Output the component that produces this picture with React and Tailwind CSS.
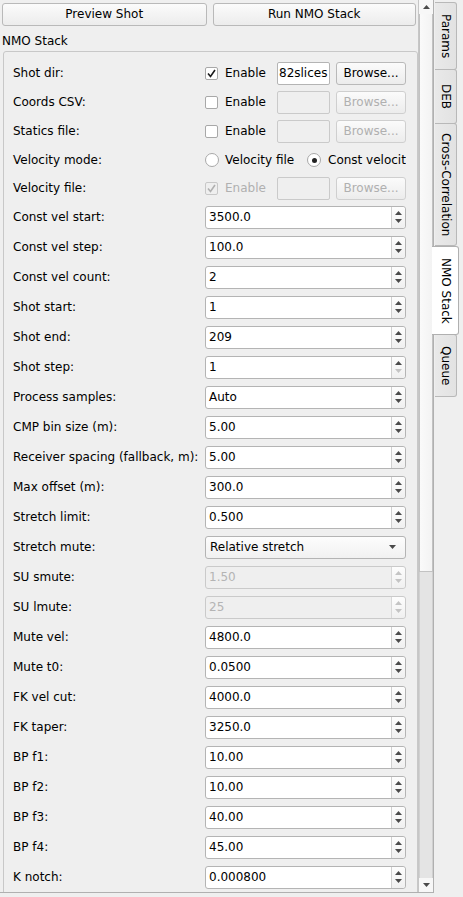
import React from 'react'

const font = { fontFamily: '"DejaVu Sans", "Liberation Sans", sans-serif' }

const Up = ({ dim }) => (
  <svg width="7" height="4" viewBox="0 0 7 4">
    <path d="M0 4 L3.5 0 L7 4 Z" fill={dim ? '#c4c4c4' : '#4a4a4a'} />
  </svg>
)

const Down = ({ dim }) => (
  <svg width="7" height="4" viewBox="0 0 7 4">
    <path d="M0 0 L7 0 L3.5 4 Z" fill={dim ? '#c4c4c4' : '#4a4a4a'} />
  </svg>
)

function PushButton({ children, disabled, className = '' }) {
  return (
    <div
      className={`flex items-center justify-center rounded-[3px] border border-[#b9b9b9] bg-gradient-to-b from-[#fbfbfb] to-[#ececec] ${disabled ? 'text-[#b0b0b0] border-[#cfcfcf]' : 'text-black'} ${className}`}
    >
      {children}
    </div>
  )
}

function CheckBox({ checked, disabled }) {
  return (
    <div
      className={`flex h-[13px] w-[13px] items-center justify-center rounded-[2px] border ${disabled ? 'border-[#c8c8c8] bg-[#efefef]' : 'border-[#a8a8a8] bg-white'}`}
    >
      {checked && (
        <svg width="9" height="9" viewBox="0 0 9 9">
          <path d="M1 4.5 L3.5 7.5 L8 1" fill="none" stroke={disabled ? '#b0b0b0' : '#1a1a1a'} strokeWidth="1.6" />
        </svg>
      )}
    </div>
  )
}

function Radio({ checked }) {
  return (
    <div className="flex h-[14px] w-[14px] shrink-0 items-center justify-center rounded-full border border-[#a8a8a8] bg-white">
      {checked && <div className="h-[5px] w-[5px] rounded-full bg-[#222]" />}
    </div>
  )
}

function FileField({ checked, disabled, enableDisabled, value }) {
  return (
    <div className="flex items-center">
      <CheckBox checked={checked} disabled={enableDisabled} />
      <span className={`ml-[7px] w-[52px] ${enableDisabled ? 'text-[#b0b0b0]' : ''}`}>Enable</span>
      <div
        className={`flex h-[23px] w-[53px] items-center overflow-hidden rounded-[2px] border px-[1px] ${disabled ? 'border-[#cacaca] bg-[#efefef]' : 'border-[#b4b4b4] bg-white'}`}
      >
        {value}
      </div>
      <PushButton disabled={disabled} className="ml-[6px] h-[23px] w-[70px]">
        Browse...
      </PushButton>
    </div>
  )
}

function SpinBox({ value, disabled, downDim }) {
  return (
    <div
      className={`flex h-[23px] w-[201px] items-stretch rounded-[3px] border ${disabled ? 'border-[#cacaca] bg-[#efefef] text-[#b4b4b4]' : 'border-[#b4b4b4] bg-white text-black'}`}
    >
      <div className="flex flex-1 items-center pl-[3px]">{value}</div>
      <div
        className={`flex w-[14px] flex-col items-center justify-center gap-[4px] border-l ${disabled ? 'border-[#d8d8d8]' : 'border-[#d0d0d0]'} bg-gradient-to-b from-[#fdfdfd] to-[#f0f0f0] rounded-r-[3px]`}
      >
        <Up dim={disabled} />
        <Down dim={disabled || downDim} />
      </div>
    </div>
  )
}

function ComboBox({ value }) {
  return (
    <div className="flex h-[23px] w-[201px] items-center justify-between rounded-[3px] border border-[#b4b4b4] bg-gradient-to-b from-[#fdfdfd] to-[#f1f1f1] pl-[4px] pr-[9px]">
      <span>{value}</span>
      <Down />
    </div>
  )
}

function Row({ label, h, children }) {
  return (
    <div className={`flex items-center ${h}`}>
      <div className="w-[192px]">{label}</div>
      <div className="w-[201px] overflow-hidden whitespace-nowrap">{children}</div>
    </div>
  )
}

const spins = [
  ['Const vel start:', '3500.0'],
  ['Const vel step:', '100.0'],
  ['Const vel count:', '2'],
  ['Shot start:', '1'],
  ['Shot end:', '209'],
  ['Shot step:', '1', { downDim: true }],
  ['Process samples:', 'Auto'],
  ['CMP bin size (m):', '5.00'],
  ['Receiver spacing (fallback, m):', '5.00'],
  ['Max offset (m):', '300.0'],
  ['Stretch limit:', '0.500'],
  ['Stretch mute:', 'Relative stretch', { combo: true }],
  ['SU smute:', '1.50', { disabled: true }],
  ['SU lmute:', '25', { disabled: true }],
  ['Mute vel:', '4800.0'],
  ['Mute t0:', '0.0500'],
  ['FK vel cut:', '4000.0'],
  ['FK taper:', '3250.0'],
  ['BP f1:', '10.00'],
  ['BP f2:', '10.00'],
  ['BP f3:', '40.00'],
  ['BP f4:', '45.00'],
  ['K notch:', '0.000800'],
]

const tabs = [
  { name: 'Params', h: 'h-[68px]' },
  { name: 'DEB', h: 'h-[55px]' },
  { name: 'Cross-Correlation', h: 'h-[123px]' },
  { name: 'NMO Stack', h: 'h-[89px]', active: true },
  { name: 'Queue', h: 'h-[63px]' },
]

function TabBar() {
  return (
    <div className="-ml-px flex w-[30px] flex-col pt-[2px]">
      {tabs.map((t) =>
        t.active ? (
          <div
            key={t.name}
            className={`relative z-10 -ml-px flex w-[27px] items-center justify-center rounded-r-[3px] border-y border-r border-[#b0b0b0] bg-white ${t.h}`}
          >
            <span className="[writing-mode:vertical-rl]">{t.name}</span>
          </div>
        ) : (
          <div
            key={t.name}
            className={`ml-[2px] flex w-[22px] items-center justify-center rounded-r-[3px] border border-l-0 border-[#b8b8b8] bg-gradient-to-r from-[#e9e9e9] to-[#e2e2e2] -mt-px first:mt-0 ${t.h}`}
          >
            <span className="[writing-mode:vertical-rl]">{t.name}</span>
          </div>
        )
      )}
    </div>
  )
}

function ScrollBar() {
  return (
    <div className="flex h-full w-[15px] flex-col border-l border-[#c6c6c6] bg-[#efefef]">
      <div className="flex h-[14px] items-center justify-center bg-[#f7f7f7]">
        <Up />
      </div>
      <div className="h-[558px] border-x border-b border-[#c2c2c2] bg-gradient-to-r from-[#fafafa] to-[#f3f3f3]" />
      <div className="flex-1 border-x border-[#d0d0d0] bg-[#e4e4e4]" />
      <div className="flex h-[14px] items-center justify-center bg-[#f7f7f7]">
        <Down />
      </div>
    </div>
  )
}

export default function App() {
  return (
    <div className="flex h-[897px] w-[463px] overflow-hidden bg-[#efefef] text-[12px] leading-[15px] text-black" style={font}>
      <div className="flex h-[893px] w-[434px] border-b border-r border-[#b0b0b0]">
        <div className="h-full w-[418px] overflow-hidden">
          <div className="flex gap-[6px] px-[2px] pt-[3px]">
            <PushButton className="h-[23px] w-[205px]">Preview Shot</PushButton>
            <PushButton className="h-[23px] w-[204px]">Run NMO Stack</PushButton>
          </div>
          <div className="h-[25px] pl-[2px] pt-[8px]">NMO Stack</div>
          <div className="ml-[3px] w-[415px] rounded-[3px] border border-[#c8c8c8] pl-[9px] pt-[10px]">
            <div className="flex flex-col gap-[6px]">
              <Row label="Shot dir:" h="h-[23px]">
                <FileField checked value="82slices" />
              </Row>
              <Row label="Coords CSV:" h="h-[23px]">
                <FileField disabled />
              </Row>
              <Row label="Statics file:" h="h-[23px]">
                <FileField disabled />
              </Row>
              <Row label="Velocity mode:" h="h-[22px]">
                {/* the radio pair is wider than the field column, Qt clips it */}
                <div className="flex w-[201px] items-center overflow-hidden">
                  <Radio />
                  <span className="ml-[6px] w-[82px] shrink-0">Velocity file</span>
                  <Radio checked />
                  <span className="ml-[7px] shrink-0">Const velocity</span>
                </div>
              </Row>
              <Row label="Velocity file:" h="h-[22px]">
                <FileField checked disabled enableDisabled />
              </Row>
              {spins.map(([label, value, opt = {}]) => (
                <Row key={label} label={label} h="h-[24px]">
                  {opt.combo ? (
                    <ComboBox value={value} />
                  ) : (
                    <SpinBox value={value} disabled={opt.disabled} downDim={opt.downDim} />
                  )}
                </Row>
              ))}
              <div className="h-[40px]" />
            </div>
          </div>
        </div>
        <ScrollBar />
      </div>
      <TabBar />
    </div>
  )
}
